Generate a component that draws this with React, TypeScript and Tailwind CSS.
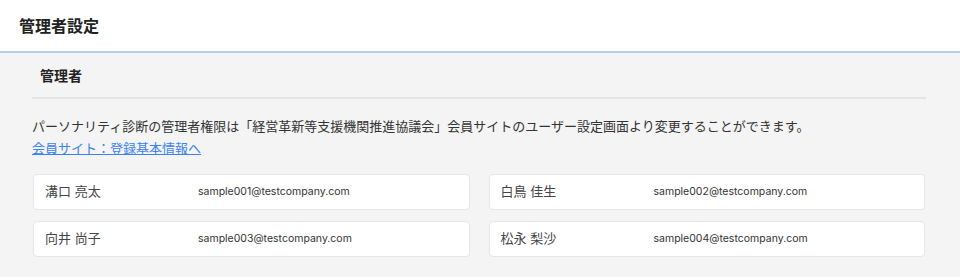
const admins = [
  { name: "溝口 亮太", email: "sample001@testcompany.com" },
  { name: "白鳥 佳生", email: "sample002@testcompany.com" },
  { name: "向井 尚子", email: "sample003@testcompany.com" },
  { name: "松永 梨沙", email: "sample004@testcompany.com" },
];

function App() {
  return (
    <div className="min-h-[277px] bg-[#f4f4f4] font-['Inter','Noto_Sans_CJK_JP',sans-serif] text-[#333]">
      <header className="h-[53px] bg-white border-b-2 border-[#b3cff0] px-[19px] flex items-center">
        <h1 className="text-[16px] font-semibold text-[#222]">管理者設定</h1>
      </header>

      <div className="pl-[32px] pr-[34px]">
        <div className="border-b-2 border-[#e4e4e4] h-[46px] flex items-center pl-[8px]">
          <h2 className="text-[14px] font-semibold text-[#222]">管理者</h2>
        </div>

        <p className="mt-[18px] text-[13px] leading-[18px]">
          パーソナリティ診断の管理者権限は「経営革新等支援機関推進協議会」会員サイトのユーザー設定画面より変更することができます。
        </p>
        <a href="#" className="text-[13px] leading-[18px] text-[#3b82f6] underline">
          会員サイト：登録基本情報へ
        </a>

        <div className="mt-[15px] grid grid-cols-2 gap-x-[19px] gap-y-[11px] pl-[1px] pr-[1px]">
          {admins.map((a) => (
            <div
              key={a.email}
              className="h-[36px] bg-white border border-[#e6e6e6] rounded-[4px] flex items-center pl-[11px]"
            >
              <span className="w-[153px] text-[13px] text-[#444]">{a.name}</span>
              <span className="text-[10.5px] text-[#333]">{a.email}</span>
            </div>
          ))}
        </div>
      </div>
    </div>
  );
}

export default App;
